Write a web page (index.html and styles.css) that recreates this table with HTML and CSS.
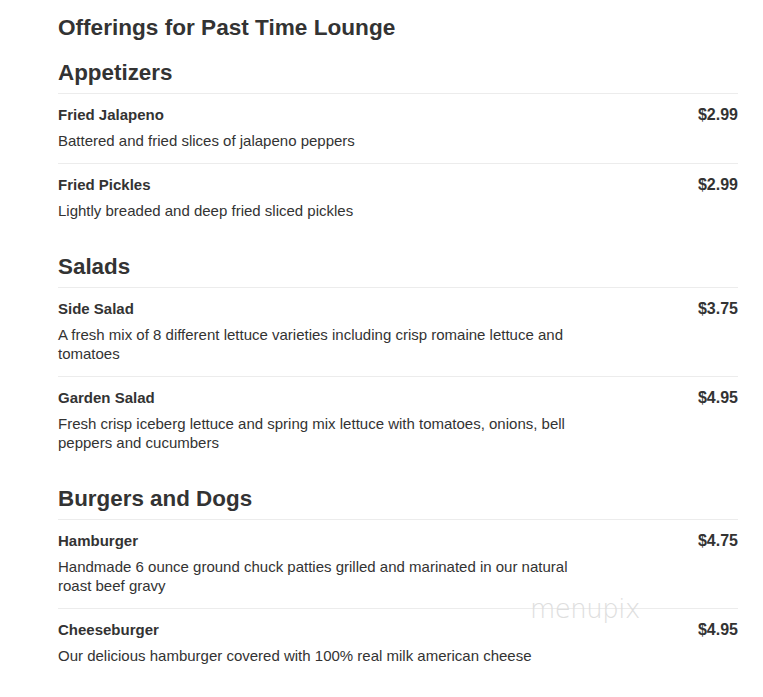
FILE: index.html
```html
<!DOCTYPE html>
<html>
<head>
<meta charset="utf-8">
<link rel="stylesheet" href="styles.css">
</head>
<body>
<div class="page">
  <h1 class="title">Offerings for Past Time Lounge</h1>

  <section class="section">
    <h2 class="section-title">Appetizers</h2>
    <div class="item">
      <div class="item-text">
        <div class="item-name">Fried Jalapeno</div>
        <div class="item-desc">Battered and fried slices of jalapeno peppers</div>
      </div>
      <div class="item-price">$2.99</div>
    </div>
    <div class="item">
      <div class="item-text">
        <div class="item-name">Fried Pickles</div>
        <div class="item-desc">Lightly breaded and deep fried sliced pickles</div>
      </div>
      <div class="item-price">$2.99</div>
    </div>
  </section>

  <section class="section">
    <h2 class="section-title">Salads</h2>
    <div class="item">
      <div class="item-text">
        <div class="item-name">Side Salad</div>
        <div class="item-desc">A fresh mix of 8 different lettuce varieties including crisp romaine lettuce and tomatoes</div>
      </div>
      <div class="item-price">$3.75</div>
    </div>
    <div class="item">
      <div class="item-text">
        <div class="item-name">Garden Salad</div>
        <div class="item-desc">Fresh crisp iceberg lettuce and spring mix lettuce with tomatoes, onions, bell peppers and cucumbers</div>
      </div>
      <div class="item-price">$4.95</div>
    </div>
  </section>

  <section class="section">
    <h2 class="section-title">Burgers and Dogs</h2>
    <div class="item">
      <div class="item-text">
        <div class="item-name">Hamburger</div>
        <div class="item-desc">Handmade 6 ounce ground chuck patties grilled and marinated in our natural roast beef gravy</div>
      </div>
      <div class="item-price">$4.75</div>
    </div>
    <div class="item">
      <div class="item-text">
        <div class="item-name">Cheeseburger</div>
        <div class="item-desc">Our delicious hamburger covered with 100% real milk american cheese</div>
      </div>
      <div class="item-price">$4.95</div>
    </div>
  </section>

  <div class="watermark">menupix</div>
</div>
</body>
</html>
```

FILE: styles.css
```css
html, body {
  margin: 0;
  padding: 0;
  background: #fff;
}

body {
  font-family: "Liberation Sans", Arial, sans-serif;
  color: #333;
}

.page {
  position: relative;
  width: 680px;
  margin-left: 58px;
  padding-top: 15px;
  padding-bottom: 20px;
}

.title {
  margin: 0;
  font-size: 22.6px;
  line-height: 26px;
  font-weight: bold;
}

.section {
  margin-top: 19px;
}

.section + .section {
  margin-top: 22px;
}

.section-title {
  margin: 0 0 7px;
  font-size: 22.4px;
  line-height: 26px;
  font-weight: bold;
}

.item {
  display: flex;
  justify-content: space-between;
  align-items: flex-start;
  border-top: 1px solid #ececec;
  padding: 11px 0 12.5px;
}

.item-text {
  width: 530px;
}

.item-name {
  font-size: 15px;
  font-weight: bold;
  line-height: 19px;
}

.item-desc {
  margin-top: 7px;
  font-size: 15px;
  line-height: 19px;
}

.item-price {
  font-size: 16px;
  font-weight: bold;
  line-height: 19px;
}

.watermark {
  position: absolute;
  left: 472px;
  top: 594px;
  font-family: "DejaVu Sans", sans-serif;
  font-weight: 200;
  font-size: 26px;
  color: #dedede;
  letter-spacing: -0.5px;
}
```
